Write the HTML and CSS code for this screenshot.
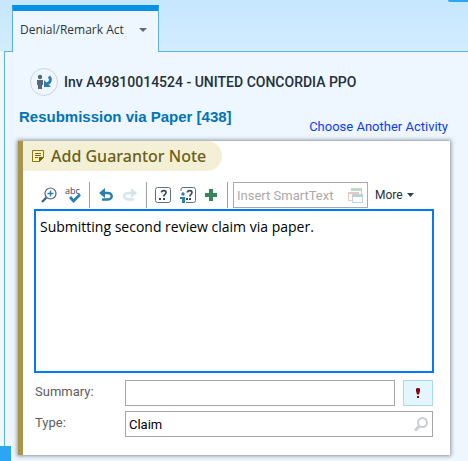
FILE: index.html
```html
<!DOCTYPE html>
<html lang="en">
<head>
<meta charset="utf-8">
<title>Denial/Remark Act</title>
<link rel="stylesheet" href="styles.css">
</head>
<body>
<header class="tabs">
  <button class="tab" type="button">Denial/Remark Act
    <svg class="caret" width="8" height="4" viewBox="0 0 8 4"><path d="M0 0h8L4 4z"/></svg>
  </button>
  <span class="corner"></span>
</header>
<main class="page">
  <div class="invoice">
    <span class="avatar">
      <svg width="16" height="16" viewBox="0 0 16 16">
        <circle cx="4" cy="3" r="2.2" fill="#57687a"/>
        <path d="M1 6h6v5H6v4H2v-4H1z" fill="#57687a"/>
        <path d="M13 2.500c2.500 3 1.500 6.500-2.500 7.300" fill="none" stroke="#2a7fae" stroke-width="2.800"/>
        <path d="M8 6v7h7z" fill="#2a7fae"/>
      </svg>
    </span>
    <h1 class="invoice-name">Inv A49810014524 - UNITED CONCORDIA PPO</h1>
  </div>
  <div class="activity">
    <h2 class="activity-name">Resubmission via Paper [438]</h2>
    <a class="choose" href="#">Choose Another Activity</a>
  </div>
  <section class="card">
    <h3 class="card-title">
      <svg width="12" height="12" viewBox="0 0 12 12">
        <path d="M.5.5h11v7l-4 4h-7z" fill="#fff3a6" stroke="#8a7524"/>
        <path d="M7 12V7h5z" fill="#6f5d16"/>
        <path d="M3 3.500h6M3 5.500h6M3 7.500h3" stroke="#6f6a4a"/>
      </svg>
      Add Guarantor Note
    </h3>
    <div class="card-body">
      <div class="toolbar">
        <div class="group group-find">
          <button class="tool" type="button" aria-label="Zoom">
            <svg width="16" height="16" viewBox="0 0 16 16" fill="none">
              <circle cx="9.500" cy="6.500" r="5.500" stroke="#4c6276" stroke-width="1.200"/>
              <path d="M5.500 10.500L1 15" stroke="#4c6276" stroke-width="2.400"/>
              <path d="M9.500 3.500v6M6.500 6.500h6" stroke="#2a7fae" stroke-width="1.400"/>
            </svg>
          </button>
          <button class="tool" type="button" aria-label="Spell check">
            <svg width="18" height="22" viewBox="0 0 18 22">
              <text class="abc" x="1" y="10">abc</text>
              <path d="M6 13l3.500 4L16 10.500" fill="none" stroke="#2a7fae" stroke-width="2.800"/>
            </svg>
          </button>
        </div>
        <div class="group group-history">
          <button class="tool" type="button" aria-label="Undo">
            <svg width="16" height="14" viewBox="0 0 16 14">
              <path d="M1 5l6-5v10z" fill="#2a7fae"/>
              <path d="M6 5h4c5 0 5 6.500 0 6.500H4" fill="none" stroke="#2a7fae" stroke-width="2.400"/>
            </svg>
          </button>
          <button class="tool" type="button" aria-label="Redo">
            <svg width="16" height="14" viewBox="0 0 16 14">
              <path d="M15 5L9 0v10z" fill="#d3e5ee"/>
              <path d="M10 5H6c-5 0-5 6.500 0 6.500h6" fill="none" stroke="#d3e5ee" stroke-width="2.400"/>
            </svg>
          </button>
        </div>
        <div class="group group-insert">
          <button class="tool" type="button" aria-label="Next field">
            <svg width="16" height="16" viewBox="0 0 16 16">
              <rect x=".5" y=".5" width="15" height="15" rx="2" fill="#fff" stroke="#5b7083"/>
              <path d="M6.500 5.500c0-2.500 4.500-2.500 4.500 0 0 2-2.200 1.800-2.200 4" fill="none" stroke="#33475a" stroke-width="1.600"/>
              <path d="M8 11h2v2H8zM4 11h2v2H4z" fill="#33475a"/>
            </svg>
          </button>
          <button class="tool" type="button" aria-label="Personal field">
            <svg width="16" height="16" viewBox="0 0 16 16">
              <path d="M1 4V2.500Q1 .5 3 .5h10.500q2 0 2 2v11q0 2-2 2H6" fill="none" stroke="#5b7083"/>
              <path d="M7.500 5.500c0-2.500 4.500-2.500 4.500 0 0 2-2.200 1.800-2.200 4" fill="none" stroke="#33475a" stroke-width="1.600"/>
              <path d="M9 11h2v2H9zM6 11h2v2H6z" fill="#33475a"/>
              <circle cx="3" cy="7" r="1.700" fill="#2a7fae"/>
              <path d="M0 10h5v6H2v-4H0z" fill="#2a7fae"/>
            </svg>
          </button>
          <button class="tool" type="button" aria-label="Add">
            <svg width="12" height="12" viewBox="0 0 12 12"><path d="M4 0h4v4h4v4H8v4H4V8H0V4h4z" fill="#37855a"/></svg>
          </button>
        </div>
        <label class="smart">
          <input type="text" placeholder="Insert SmartText" aria-label="Insert SmartText">
          <svg width="15" height="15" viewBox="0 0 15 15" fill="none">
            <path d="M3.500 3V1h10v6" stroke="#bfd8c8"/><path d="M3 1.500h11" stroke="#bfd8c8" stroke-width="3"/>
            <path d="M4 12.500H.5v-8h10" stroke="#edc8c0"/><path d="M0 5h11" stroke="#edc8c0" stroke-width="2"/>
            <path d="M4.500 7v7.500h10V7" fill="#fff" stroke="#b9d2e2"/><path d="M4 7.500h11" stroke="#b9d2e2" stroke-width="3"/>
          </svg>
        </label>
        <button class="more" type="button">More
          <svg width="7" height="4" viewBox="0 0 7 4"><path d="M0 0h7L3.500 4z"/></svg>
        </button>
      </div>
      <textarea class="note" aria-label="Note">Submitting second review claim via paper.</textarea>
      <div class="field">
        <label for="summary">Summary:</label>
        <input class="box" id="summary" type="text">
        <button class="flag" type="button" aria-label="High priority">
          <svg width="4" height="10" viewBox="0 0 4 10" fill="#8b0000"><path d="M0 1q0-1 2-1t2 1v2L3 6.500H1L0 3zM1 8h2v2H1z"/></svg>
        </button>
      </div>
      <div class="field">
        <label for="type">Type:</label>
        <span class="box lookup">
          <input id="type" type="text" value="Claim">
          <svg width="14" height="15" viewBox="0 0 14 15" fill="none" stroke="#c9ced6">
            <circle cx="8.500" cy="5.500" r="4.500" stroke-width="2"/><path d="M5 9.500L1 13.500" stroke-width="3"/>
          </svg>
        </span>
      </div>
    </div>
  </section>
</main>
<span class="dock"></span>
</body>
</html>
```
FILE: styles.css
```css
* {
  box-sizing: border-box;
}

body {
  margin: 0;
  min-height: 100vh;
  overflow: hidden;
  display: flex;
  flex-direction: column;
  background: #eef6ff;
  font-family: Roboto, "Liberation Sans", Arial, sans-serif;
  font-size: 13px;
  color: #24303a;
}

button,
input,
textarea {
  font: inherit;
  color: inherit;
  margin: 0;
  padding: 0;
  border: 0;
  border-radius: 0;
  background: none;
  outline: 0;
}

h1,
h2,
h3 {
  margin: 0;
}

svg {
  display: block;
  flex: none;
}

.tabs {
  position: relative;
  padding: 5px 12px 0;
  background: linear-gradient(#c6e7ff, #d2ecff);
}

.tab {
  position: relative;
  display: flex;
  align-items: center;
  gap: 15px;
  height: 47px;
  margin-bottom: -1px;
  padding: 0 11px 4px 7px;
  border: 1px solid #5cb0e4;
  border-top: 6px solid #0091ea;
  border-bottom: 0;
  background: #eef6ff;
  font-family: "Open Sans", sans-serif;
  font-size: 12px;
  line-height: 16px;
  color: #2d3640;
}

.caret {
  fill: #5a6b7b;
}

.corner {
  position: absolute;
  top: 0;
  right: 0;
  width: 20px;
  height: 2px;
  border-bottom-left-radius: 4px;
  background: #2ba6f2;
}

.page {
  flex: 1;
  margin-left: 4px;
  padding: 16px 18px 0 13px;
  border-top: 1px solid #5cb0e4;
  border-left: 1px solid #5cb0e4;
}

.invoice {
  display: flex;
  align-items: center;
  gap: 6px;
  padding: 0 12px;
}

.avatar {
  display: grid;
  place-items: center;
  width: 28px;
  height: 28px;
  border: 1px solid #d0d4d8;
  border-radius: 50%;
}

.invoice-name {
  font: 500 14px/18px Roboto, sans-serif;
}

.activity {
  display: flex;
  justify-content: space-between;
  align-items: flex-end;
  height: 39px;
  margin-bottom: 6px;
  padding: 0 2px 0 1px;
}

.activity-name {
  padding-bottom: 9px;
  font: bold 15px/18px "Liberation Sans", Arial, sans-serif;
  color: #0074b8;
}

.choose {
  line-height: 16px;
  color: #0a3cff;
  text-decoration: none;
}

.card {
  border-left: 5px solid #a8944a;
  background: #fff;
  box-shadow: 0 0 4px 1px #8a949e;
}

.card-title {
  display: flex;
  align-items: center;
  gap: 7px;
  width: fit-content;
  height: 30px;
  padding: 0 16px 0 9px;
  border-radius: 0 15px 15px 0;
  background: #f4f0d5;
  font: 500 16px/24px "Noto Sans", sans-serif;
  color: #6b6018;
}

.card-body {
  padding: 11px 16px 18px 11px;
}

.toolbar {
  display: flex;
  align-items: stretch;
  height: 26px;
  margin-bottom: 1px;
}

.group {
  display: flex;
  align-items: center;
  border-right: 1px solid #9aa0a6;
}

.group-find {
  gap: 7px;
  padding: 0 7px;
}

.abc {
  font-family: "Open Sans", sans-serif;
  font-size: 9px;
  fill: #33475a;
}

.group-history {
  gap: 8px;
  padding: 0 8px;
}

.group-insert {
  gap: 9px;
  padding: 0 10px 0 8px;
}

.smart {
  display: flex;
  align-items: center;
  gap: 8px;
  flex: 0 1 135px;
  min-width: 0;
  margin-left: 5px;
  padding: 0 4px 0 3px;
  border: 1px solid #a9a9a9;
}

.smart input {
  flex: 1;
  min-width: 0;
}

.smart input::placeholder {
  color: #aaa;
}

.more {
  display: flex;
  align-items: center;
  gap: 4px;
  margin-left: 7px;
  font-size: 12px;
  fill: #33414e;
}

.note {
  display: block;
  width: 100%;
  height: 164px;
  margin-bottom: 7px;
  padding: 6px 4px;
  border: 2px solid #0078ff;
  resize: none;
  font: 14px/20px "Open Sans", sans-serif;
  color: #000;
}

.field {
  display: flex;
  gap: 8px;
  height: 26px;
  margin-right: 1px;
}

.field + .field {
  margin-top: 5px;
}

.field label {
  width: 83px;
  padding-left: 1px;
  line-height: 24px;
  color: #5d5d5d;
}

.box {
  flex: 1;
  min-width: 0;
  padding: 0 4px 0 3px;
  border: 1px solid #a6a6a6;
}

.lookup {
  display: flex;
  align-items: center;
}

.lookup input {
  flex: 1;
  min-width: 0;
  color: #000;
}

.flag {
  display: grid;
  place-items: center;
  width: 30px;
  border: 1px solid #add8e6;
  background: #e3f6fd;
}

.dock {
  position: fixed;
  left: 0;
  bottom: 0;
  width: 11px;
  height: 15px;
  background: #2ba6f2;
}
```
